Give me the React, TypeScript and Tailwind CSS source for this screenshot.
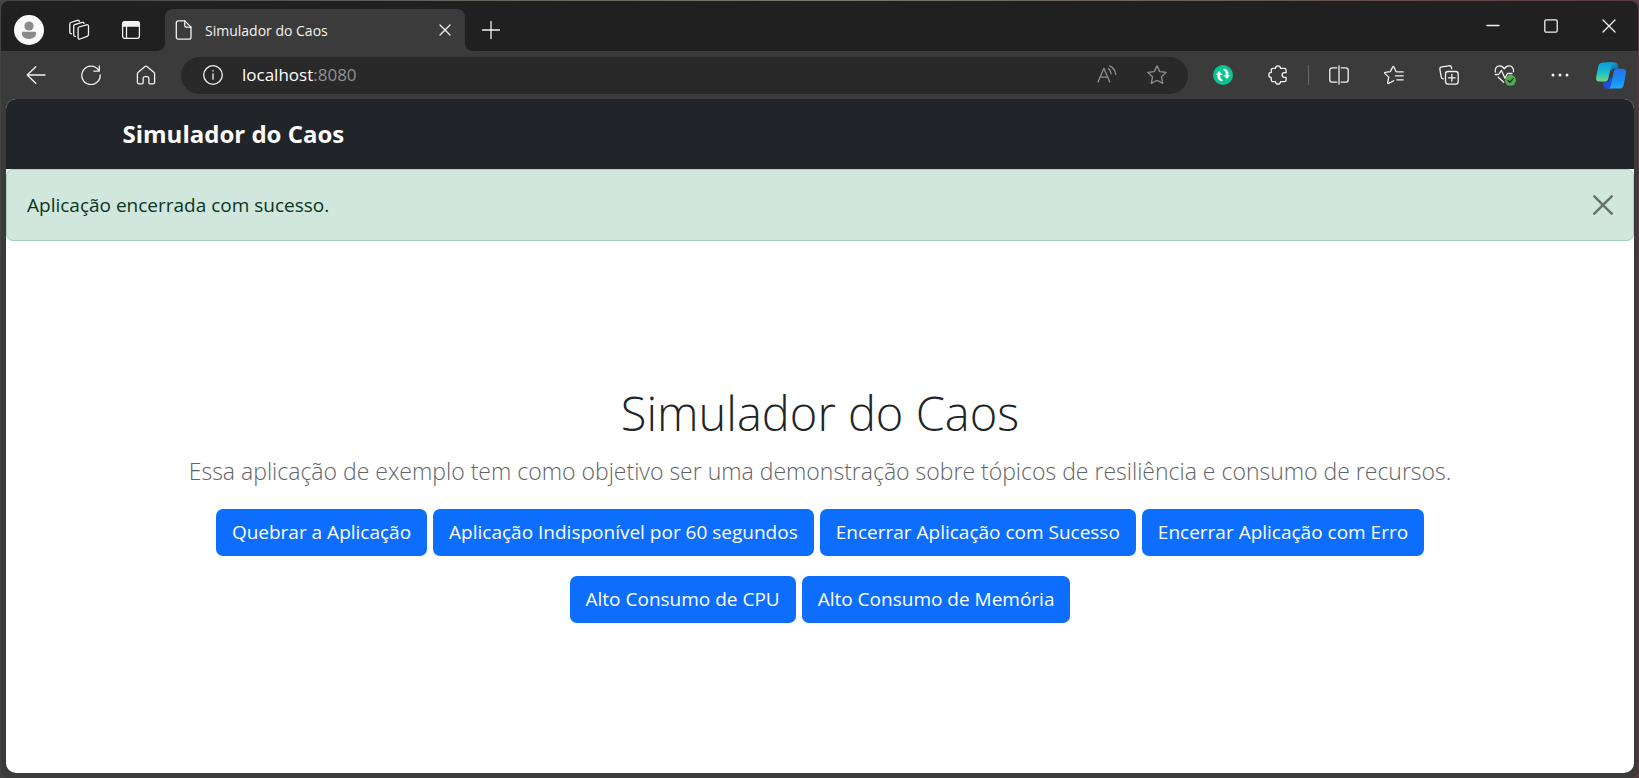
import type { ReactNode } from "react";

const stroke = {
  fill: "none",
  stroke: "currentColor",
  strokeWidth: 1.3,
  strokeLinecap: "round",
  strokeLinejoin: "round",
} as const;

function Icon({ children, size = 20 }: { children: ReactNode; size?: number }) {
  return (
    <svg width={size} height={size} viewBox={`0 0 ${size} ${size}`} {...stroke} aria-hidden="true">
      {children}
    </svg>
  );
}

function IconButton({ label, children, className = "" }: { label: string; children: ReactNode; className?: string }) {
  return (
    <button type="button" aria-label={label} className={`flex shrink-0 items-center justify-center ${className}`}>
      {children}
    </button>
  );
}

function TabStrip() {
  return (
    <header className="flex h-[50px] items-stretch bg-[#202020] pl-[13px] text-[#f2f2f2]">
      <div className="flex items-center pt-2">
        <IconButton label="Perfil" className="size-[30px]">
          <svg width="30" height="30" viewBox="0 0 30 30" aria-hidden="true">
            <circle cx="15" cy="15" r="15" fill="#fafafa" />
            <circle cx="15" cy="11" r="4.6" fill="#8a8a8a" />
            <path d="M9.4 16.8h11.2c.9 0 1.5.6 1.5 1.5 0 3.4-2.8 5.6-7.1 5.6s-7.1-2.2-7.1-5.6c0-.9.6-1.5 1.5-1.5Z" fill="#8a8a8a" />
          </svg>
        </IconButton>
        <IconButton label="Espaços de trabalho" className="ml-6 size-[22px]">
          <Icon size={22}>
            <path d="m11 8 7.600-2.200c1-.3 1.900.3 1.900 1.300v8.400c0 .9-.5 1.500-1.300 1.800L12 20c-1 .3-1.900-.3-1.900-1.300V9.300c0-.6.3-1.100.9-1.300Z" />
            <path d="M7.400 17.400c-1 0-1.700-.6-1.700-1.500V7.100c0-.7.4-1.200 1-1.400l7.400-2.300c1-.3 1.700.1 1.900.9" />
            <path d="M3.500 14.700c-1 0-1.700-.6-1.700-1.500V4.900c0-.7.4-1.200 1-1.400l6.600-2.100c1-.3 1.700.1 1.900.9" />
          </Icon>
        </IconButton>
        <IconButton label="Menu de guias" className="ml-[31px] size-5">
          <Icon>
            <rect x="1.600" y="1.600" width="16.800" height="16.800" rx="2.500" />
            <path d="M1.600 4c0-1.500 1-2.400 2.400-2.400h12c1.500 0 2.400 1 2.400 2.400v2H1.600Z" fill="currentColor" />
            <path d="M5.500 6v12.400" />
          </Icon>
        </IconButton>
      </div>
      <div className="relative ml-[24px] mt-2 flex w-[300px] items-center rounded-t-lg bg-[#3b3b3b] pl-[10px] pr-[10px]">
        <svg className="absolute -left-2 bottom-0" width="8" height="8" viewBox="0 0 8 8" aria-hidden="true">
          <path d="M8 0v8H0c4.400 0 8-3.600 8-8Z" fill="#3b3b3b" />
        </svg>
        <svg className="absolute -right-2 bottom-0" width="8" height="8" viewBox="0 0 8 8" aria-hidden="true">
          <path d="M0 0v8h8C3.600 8 0 4.400 0 0Z" fill="#3b3b3b" />
        </svg>
        <Icon size={20}>
          <path d="M3.200.9h6.600l6.200 6.200v10.200c0 1.100-.8 1.900-1.900 1.900H3.200c-1.100 0-1.900-.8-1.900-1.900V2.800C1.300 1.700 2.100.9 3.200.9Z" />
          <path d="M9.800.9v4.600c0 1 .7 1.700 1.700 1.700H16" />
        </Icon>
        <span className="ml-[10px] flex-1 whitespace-nowrap text-[14px]">Simulador do Caos</span>
        <IconButton label="Fechar guia" className="size-5">
          <Icon><path d="m5 5 10 10M15 5 5 15" /></Icon>
        </IconButton>
      </div>
      <IconButton label="Nova guia" className="ml-4 mt-2 w-5">
        <Icon><path d="M10 1.500v17M1.500 10h17" /></Icon>
      </IconButton>
      <div className="ml-auto flex">
        <IconButton label="Minimizar" className="w-[58px]">
          <Icon><path d="M4 9.500h12" /></Icon>
        </IconButton>
        <IconButton label="Maximizar" className="w-[58px]">
          <Icon><rect x="3.800" y="3.800" width="12.400" height="12.400" rx="1.500" /></Icon>
        </IconButton>
        <IconButton label="Fechar" className="w-[58px]">
          <Icon><path d="m4 4 12 12M16 4 4 16" /></Icon>
        </IconButton>
      </div>
    </header>
  );
}

function Toolbar() {
  return (
    <nav aria-label="Navegação" className="flex h-12 items-center bg-[#3b3b3b] pl-[25px] pr-3 text-[#f2f2f2]">
      <IconButton label="Voltar">
        <Icon><path d="M19 10H1.200M9.800 1.800 1.200 10l8.600 8.200" /></Icon>
      </IconButton>
      <IconButton label="Atualizar" className="ml-[35px]">
        <Icon><path d="M17.300 4.700A9.200 9.200 0 1 0 19.200 10M18.300.9v5.200h-5.500" /></Icon>
      </IconButton>
      <IconButton label="Página inicial" className="ml-[35px]">
        <Icon><path d="M9 1.500 2.200 7.300c-.5.4-.8 1-.8 1.700v8.200c0 .9.7 1.600 1.600 1.600h3c.6 0 1.100-.5 1.100-1.100v-4.200c0-1.200.7-1.900 1.700-1.900h2.400c1 0 1.700.7 1.700 1.900v4.200c0 .6.5 1.100 1.100 1.100h3c.9 0 1.600-.7 1.600-1.600V9c0-.7-.3-1.300-.8-1.700L11 1.500c-.6-.5-1.400-.5-2 0Z" /></Icon>
      </IconButton>
      <div className="ml-[25px] flex h-[37px] min-w-0 flex-1 items-center rounded-full bg-[#292929] pl-[22px] pr-[21px]">
        <IconButton label="Informações do site">
          <Icon><circle cx="10" cy="10" r="9.300" /><path d="M10 9v5.200M10 5.700v.3" /></Icon>
        </IconButton>
        <a href="http://localhost:8080" className="ml-[19px] flex-1 whitespace-nowrap text-[17px] text-white">
          localhost<span className="text-[#8f8f8f]">:8080</span>
        </a>
        <div className="flex items-center gap-[30px] text-[#8f8f8f]">
          <IconButton label="Ler em voz alta">
            <Icon><path d="M1 17 6.900 3.200 12.800 17M3 12.200h7.800M11.400 3.600c1.800 1.300 2.700 3 2.800 5.200M12.700.9c3.600 1.900 5.700 4.800 6 8.500" /></Icon>
          </IconButton>
          <IconButton label="Adicionar aos favoritos">
            <Icon><path d="m10 .9 2.700 5.700 6.500.8-4.700 4.400 1.200 6.600L10 15.300l-5.700 3.100 1.200-6.600L.8 7.400l6.500-.8Z" /></Icon>
          </IconButton>
        </div>
      </div>
      <IconButton label="Extensão de sincronização" className="ml-[25px]">
        <svg width="20" height="20" viewBox="0 0 20 20" aria-hidden="true">
          <circle cx="10" cy="10" r="10" fill="#0ac491" />
          <path d="M9.200 16.200C5.700 15.700 3.900 13 4.600 9.900L3 10l3-4 3.600 4.100-2.200-.1c-.5 2.300.2 4.200 2.400 5.300Z" fill="#fff" />
          <path d="M10.800 3.800c3.500.5 5.300 3.200 4.600 6.300l1.600-.1-3 4-3.600-4.100 2.200.1c.5-2.300-.2-4.200-2.400-5.300Z" fill="#fff" />
        </svg>
      </IconButton>
      <IconButton label="Extensões" className="ml-[35px]">
        <Icon>
          <path d="M5 3.300h2.400c.2-1.600 1.200-2.500 2.600-2.500s2.400.9 2.600 2.500h3.800c1 0 1.700.7 1.700 1.700v2.700h-1.700a2.300 2.300 0 0 0 0 4.600h1.700V15c0 1-.7 1.700-1.700 1.700h-3.800c-.2 1.600-1.200 2.500-2.600 2.500s-2.400-.9-2.600-2.500H5c-1 0-1.700-.7-1.700-1.700v-2.400C1.700 12.400.8 11.400.8 10s.9-2.400 2.500-2.600V5c0-1 .7-1.700 1.700-1.700Z" />
        </Icon>
      </IconButton>
      <span className="mx-5 h-5 w-px bg-[#686868]" />
      <IconButton label="Tela dividida">
        <Icon>
          <path d="M10 .8v18.400M7.800 2.800H3.300C2 2.800.8 4 .8 5.300v9.400c0 1.300 1.200 2.500 2.500 2.500h4.500M12.200 2.800h4.500c1.300 0 2.500 1.200 2.500 2.500v9.400c0 1.300-1.200 2.500-2.500 2.500h-4.500" />
        </Icon>
      </IconButton>
      <div className="ml-[35px] flex items-center gap-[35px]">
        <IconButton label="Favoritos">
          <Icon>
            <path d="M13.800 6.900 12 6.600 9.800 1.700c-.2-.5-.8-.5-1 0L6.400 6.600l-5.200.7c-.6.1-.8.7-.4 1.100l3.900 3.700-1 5.600c-.1.600.5 1 1 .7l5-2.700M13.800 6.900H19.200M11.500 10.900h7.700M13 14.900h6.200" />
          </Icon>
        </IconButton>
        <IconButton label="Coleções">
          <Icon>
            <path d="M4.300 13.800c-1.200-.2-1.900-.9-2.100-2L.9 4.400c-.2-1.300.5-2.300 1.800-2.500L9.900.8c1.300-.2 2.400.5 2.600 1.800l.2.9" />
            <rect x="6.500" y="6.500" width="12.700" height="12.700" rx="2.600" />
            <path d="M12.850 9.500v6.700M9.500 12.850h6.700" />
          </Icon>
        </IconButton>
        <IconButton label="Integridade do navegador">
          <Icon size={22}>
            <path d="M1.300 8C.7 4.600 2.600 1.900 5.600 1.900c2 0 3.600 1.100 4.700 2.900 1.100-1.800 2.700-2.900 4.700-2.900 3.100 0 5 2.600 4.500 5.800M1.200 10.500h3.400l2.800-4.200 3.500 8 2.500-4.800h4.600M4.300 13.300l5.400 5" />
            <circle cx="16.500" cy="16.300" r="5.500" fill="#4caf50" stroke="none" />
            <path d="m14 16.500 1.800 1.800 3.400-3.700" stroke="#202020" />
          </Icon>
        </IconButton>
        <IconButton label="Configurações e mais">
          <Icon>
            <g fill="currentColor" stroke="none"><circle cx="2" cy="10" r="1.500" /><circle cx="9" cy="10" r="1.500" /><circle cx="16" cy="10" r="1.500" /></g>
          </Icon>
        </IconButton>
      </div>
      <IconButton label="Copilot" className="ml-[25px]">
        <svg width="30" height="27" viewBox="0 0 30 27" aria-hidden="true">
          <defs>
            <linearGradient id="cp-left" x1="0" y1="0" x2="0" y2="1"><stop stopColor="#0a9de0" /><stop offset=".55" stopColor="#20bfc9" /><stop offset="1" stopColor="#70dc7b" /></linearGradient>
            <linearGradient id="cp-right" x1="0" y1="0" x2="0" y2="1"><stop stopColor="#2870ef" /><stop offset=".6" stopColor="#1690f5" /><stop offset="1" stopColor="#22a8f7" /></linearGradient>
            <linearGradient id="cp-top" x1="0" y1="0" x2="1" y2="1"><stop stopColor="#16b8e0" /><stop offset="1" stopColor="#0b60a8" /></linearGradient>
          </defs>
          <path d="M10 .4h8.500c2 0 2.900.9 3.300 2.600l.9 3.700h-4.200c-1.600 0-2.600.8-3.100 2.300L12 6Z" fill="url(#cp-top)" />
          <path d="M7 19.600h5.500l2.500-5 2 6-2 6h-4c-1.900 0-2.700-.9-3.100-2.600Z" fill="#1b4fe0" />
          <path d="M7 .4h11.200c-1.700.2-2.600 1.100-3 2.900L12.500 16c-.5 2.400-1.700 3.600-4 3.600H3.200C.8 19.600-.4 18 .1 15.400L2.300 4.300C2.800 1.700 4.400.4 7 .4Z" fill="url(#cp-left)" />
          <path d="M23 26.600H11.800c1.700-.2 2.600-1.100 3-2.900l2.700-13.400c.5-2.400 1.700-3.600 4-3.600h5.300c2.400 0 3.600 1.600 3.100 4.200l-2.200 11.800c-.5 2.600-2.100 3.900-4.700 3.900Z" fill="url(#cp-right)" />
        </svg>
      </IconButton>
    </nav>
  );
}

function ActionButton({ children }: { children: ReactNode }) {
  return (
    <button type="button" className="h-[47px] whitespace-nowrap rounded-[7px] bg-[#0d6efd] px-4 text-[19px] text-white">
      {children}
    </button>
  );
}

export default function App() {
  return (
    <div className="min-h-screen bg-linear-to-r from-[#444444] via-[#767c6c] to-[#5a3a40] px-px pt-px font-['Open_Sans','Noto_Sans',sans-serif]">
      <div className="flex min-h-[calc(100vh-1px)] flex-col overflow-hidden rounded-lg bg-[#3b3b3b]">
        <TabStrip />
        <Toolbar />
        <div className="mb-[5px] ml-[5px] mr-1 flex flex-1 flex-col overflow-hidden rounded-[10px] bg-white">
          <div className="bg-[#212529]">
            <div className="mx-auto flex h-[70px] max-w-[1425px] items-center px-[15px]">
              <a href="#" className="text-[24px] font-bold text-white">Simulador do Caos</a>
            </div>
          </div>
          <div role="alert" className="flex h-[72px] items-center justify-between rounded-[7px] border border-[#a3cfbb] bg-[#d1e7dd] px-5 text-[19px] text-[#0a3622]">
            <span>Aplicação encerrada com sucesso.</span>
            <IconButton label="Fechar aviso" className="text-[#68736e]">
              <svg width="20" height="20" viewBox="0 0 20 20" fill="none" stroke="currentColor" strokeWidth="2.500" strokeLinecap="round" aria-hidden="true">
                <path d="m1.300 1.300 17.400 17.400M18.700 1.300 1.300 18.700" />
              </svg>
            </IconButton>
          </div>
          <main className="flex flex-1 flex-col items-center px-4 pb-12 pt-[142px] text-center">
            <h1 className="text-[47px] font-light leading-[60px] text-[#212529]">Simulador do Caos</h1>
            <p className="mt-[10px] text-[23px] font-light leading-9 text-[#5f6469]">
              Essa aplicação de exemplo tem como objetivo ser uma demonstração sobre tópicos de resiliência e consumo de recursos.
            </p>
            <div className="mt-5 flex flex-wrap justify-center gap-[6px]">
              <ActionButton>Quebrar a Aplicação</ActionButton>
              <ActionButton>Aplicação Indisponível por 60 segundos</ActionButton>
              <ActionButton>Encerrar Aplicação com Sucesso</ActionButton>
              <ActionButton>Encerrar Aplicação com Erro</ActionButton>
            </div>
            <div className="mt-5 flex flex-wrap justify-center gap-[6px]">
              <ActionButton>Alto Consumo de CPU</ActionButton>
              <ActionButton>Alto Consumo de Memória</ActionButton>
            </div>
          </main>
        </div>
      </div>
    </div>
  );
}
